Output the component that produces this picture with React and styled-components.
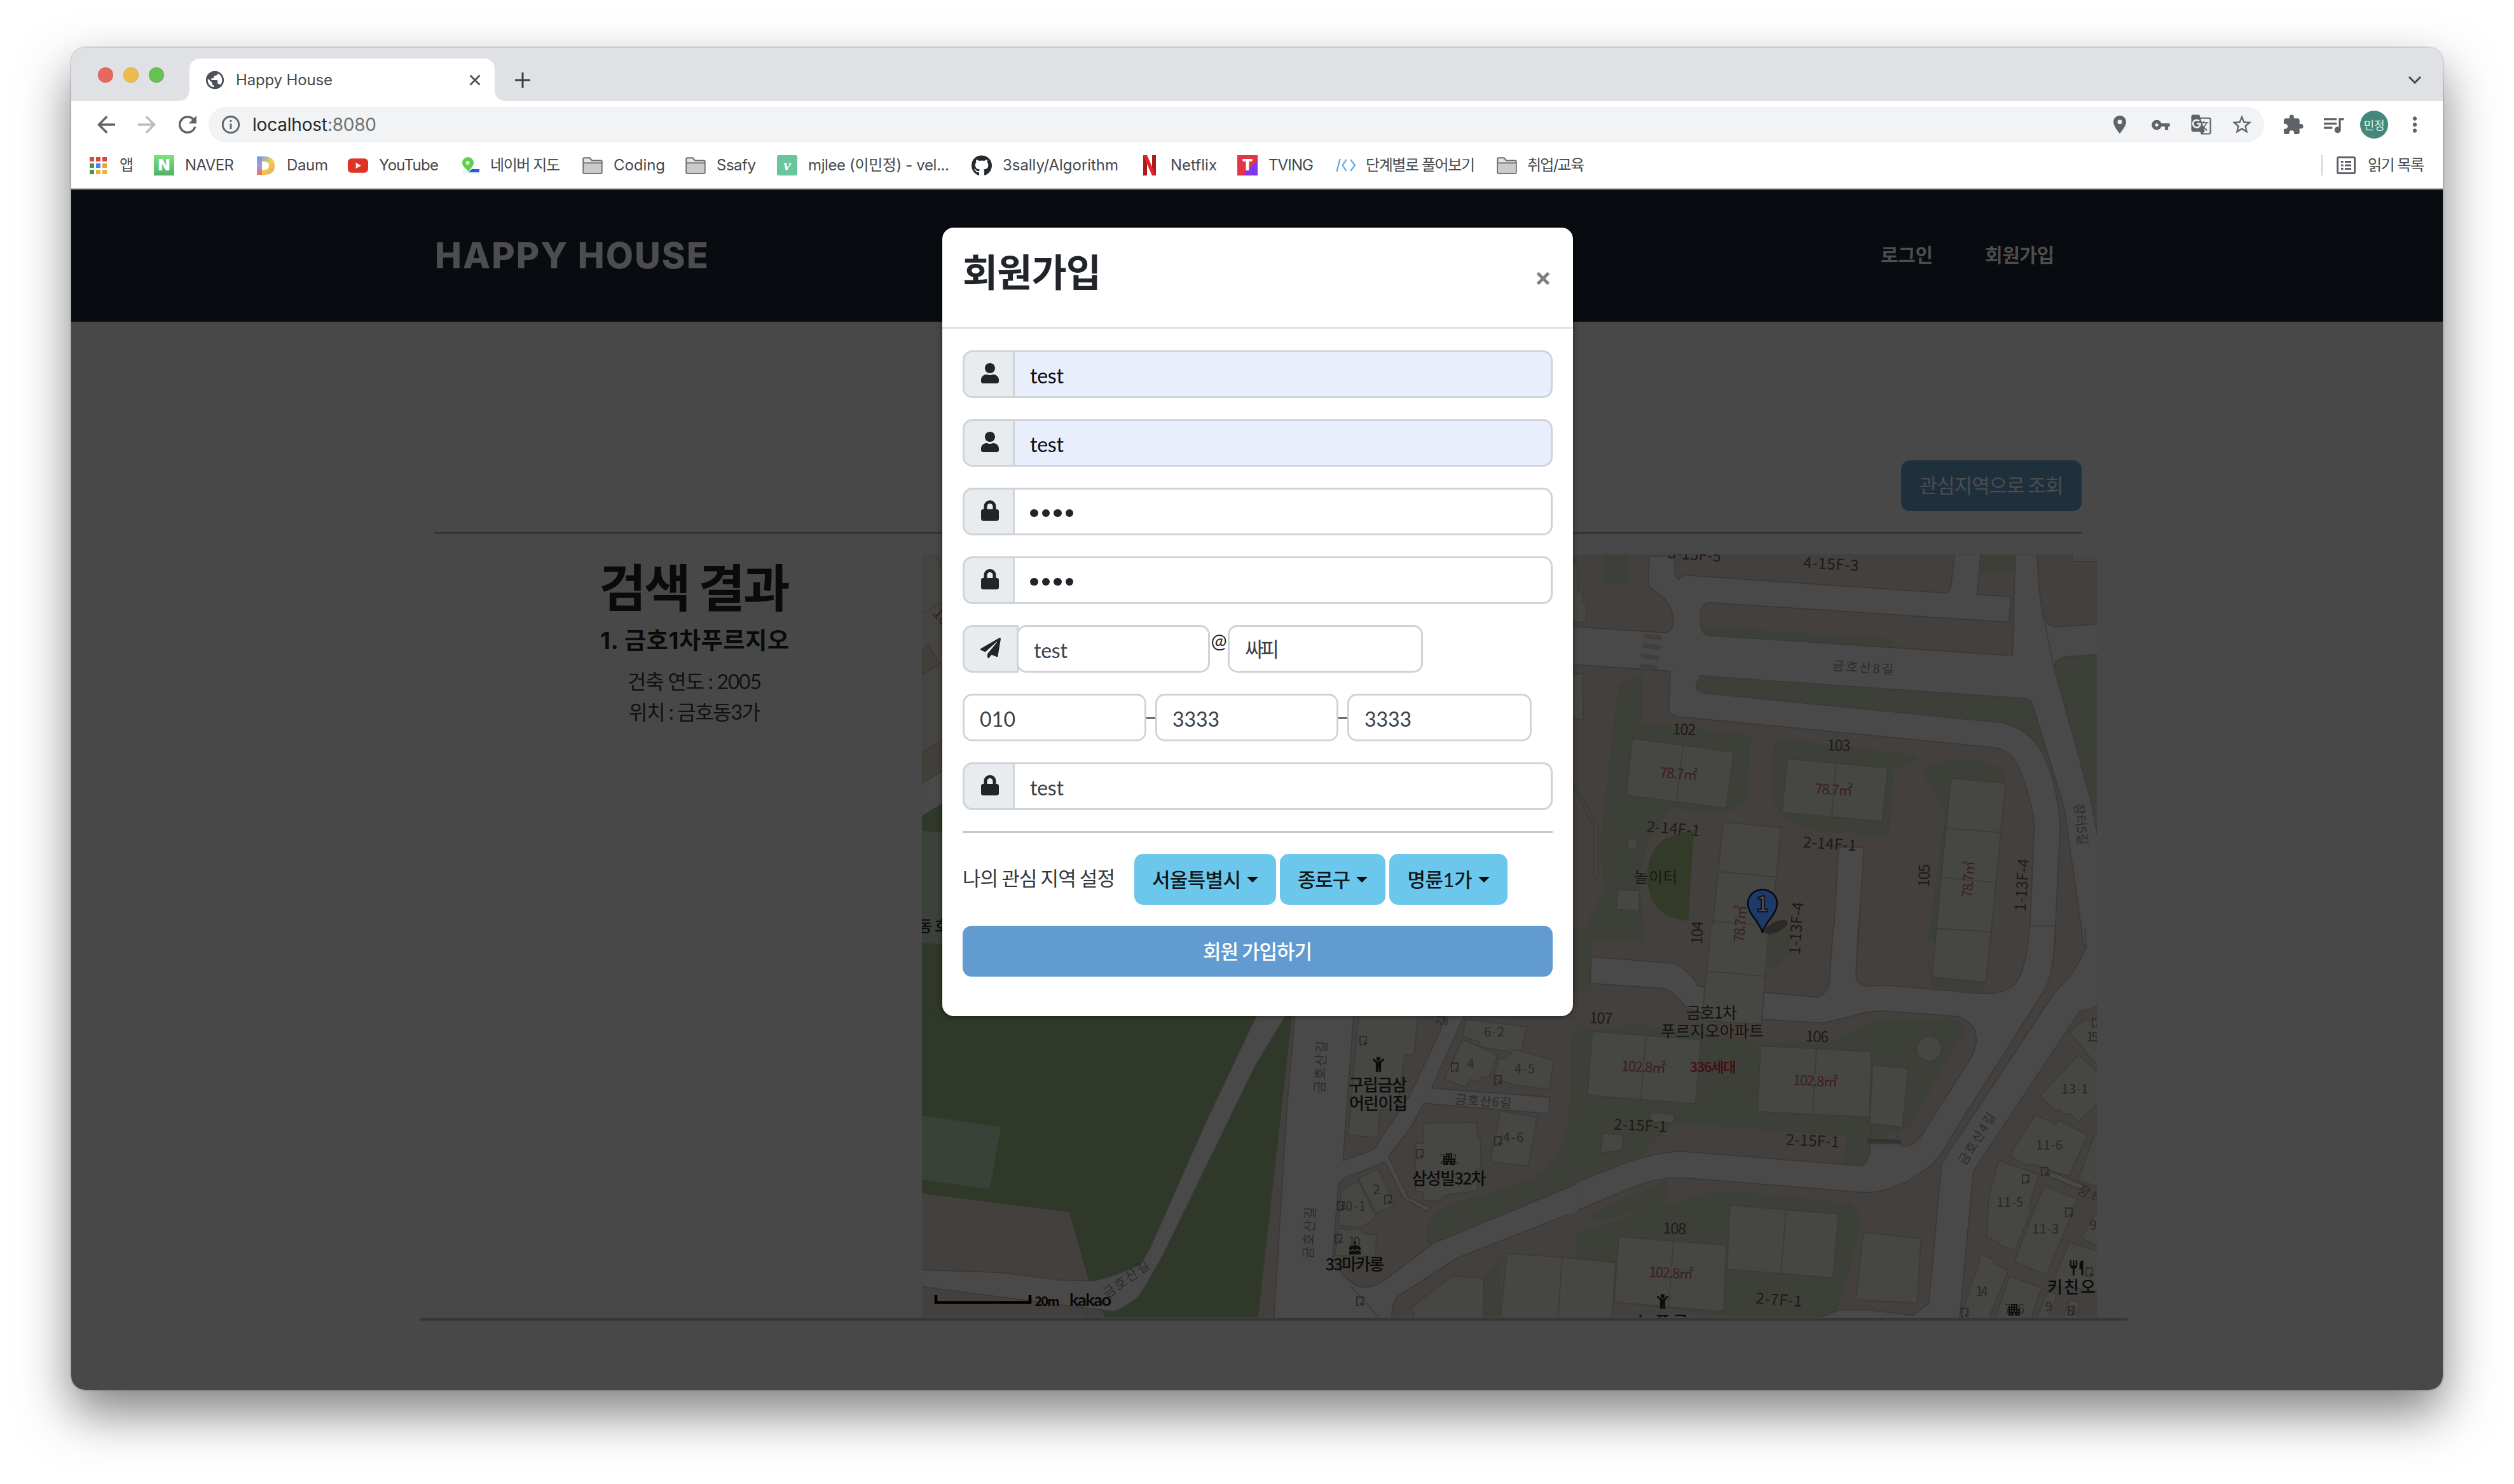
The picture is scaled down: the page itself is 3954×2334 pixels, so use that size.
import React, { useLayoutEffect, useRef, useState } from "react";
import styled, { createGlobalStyle, css } from "styled-components";
import {
  MdArrowBack, MdArrowForward, MdRefresh, MdInfoOutline, MdLocationOn, MdVpnKey, MdGTranslate,
  MdStarBorder, MdExtension, MdQueueMusic, MdMoreVert, MdPublic, MdApartment, MdCake, MdRestaurant,
} from "react-icons/md";
import { FaUser, FaLock, FaPaperPlane, FaGithub, FaChild } from "react-icons/fa";

const KR = '"Noto Sans CJK KR", sans-serif';
const UI = `Inter, ${KR}`;
const BODY = `Lato, ${KR}`;

const GlobalStyle = createGlobalStyle`
  *, *::before, *::after { box-sizing: border-box; }
  html, body { margin: 0; background: #fff; }
  svg { display: block; }
`;

/* ---------- text that is tracked to fill a known width ---------- */

const Line = styled.span`
  display: inline-block;
  white-space: nowrap;
  flex: none;
`;

function Fit({ width, children }) {
  const ref = useRef(null);
  const [spacing, setSpacing] = useState(0);
  useLayoutEffect(() => {
    const natural = ref.current.getBoundingClientRect().width;
    setSpacing((width - natural) / Math.max(1, children.length - 1));
  }, [width, children]);
  return (
    <Line ref={ref} style={{ letterSpacing: spacing, marginRight: -spacing }}>
      {children}
    </Line>
  );
}

/* ---------- browser window ---------- */

const Desktop = styled.div`
  width: 3954px;
  height: 2334px;
  padding: 75px 0 0 112px;
  background: #fff;
  overflow: hidden;
`;

const Window = styled.div`
  display: flex;
  flex-direction: column;
  width: 3730px;
  height: 2111px;
  border-radius: 22px;
  overflow: hidden;
  background: #fff;
  box-shadow: 0 0 3px rgba(0, 0, 0, 0.45), 0 36px 80px rgba(0, 0, 0, 0.5);
`;

const TabStrip = styled.div`
  display: flex;
  align-items: flex-end;
  flex: none;
  height: 84px;
  padding-left: 42px;
  background: #dfe1e5;
`;

const Lights = styled.div`
  display: flex;
  gap: 16px;
  width: 144px;
  padding-bottom: 29px;
`;

const Light = styled.span`
  width: 24px;
  height: 24px;
  border-radius: 50%;
  background: ${(p) => p.$color};
  box-shadow: inset 0 0 0 1px rgba(0, 0, 0, 0.1);
`;

const Tab = styled.div`
  position: relative;
  display: flex;
  align-items: center;
  width: 480px;
  height: 67px;
  padding: 0 21px 0 23px;
  border-radius: 16px 16px 0 0;
  background: #fff;
  color: #45494d;
  font: 400 24px/67px ${UI};
  &::before, &::after {
    content: "";
    position: absolute;
    bottom: 0;
    width: 16px;
    height: 16px;
  }
  &::before { left: -16px; background: radial-gradient(circle at 0 0, #dfe1e5 15.5px, #fff 16px); }
  &::after { right: -16px; background: radial-gradient(circle at 100% 0, #dfe1e5 15.5px, #fff 16px); }
`;

const TabTitle = styled.span`
  flex: 1;
  padding-left: 16px;
`;

const NewTab = styled.div`
  padding: 0 0 21px 32px;
`;

const TabMenu = styled.div`
  margin-left: auto;
  padding: 0 34px 27px 0;
`;

const Toolbar = styled.div`
  display: flex;
  align-items: center;
  flex: none;
  height: 74px;
  padding-left: 23px;
  color: #5f6368;
`;

const NavButton = styled.span`
  display: flex;
  justify-content: center;
  width: 64px;
  color: ${(p) => (p.$off ? "#babcbe" : "#5f6368")};
`;

const Omnibox = styled.div`
  display: flex;
  align-items: center;
  width: 3233px;
  height: 56px;
  margin-left: 1px;
  padding: 0 16px 0 18px;
  border-radius: 28px;
  background: #f1f3f4;
`;

const Address = styled.div`
  flex: 1;
  padding-left: 17px;
  color: #26282b;
  font: 400 28px/56px ${UI};
`;

const Port = styled.span`
  color: #6e7276;
`;

const OmniIcon = styled.span`
  display: flex;
  justify-content: center;
  width: 64px;
  &:last-child { margin-right: -13px; }
`;

const ActionIcon = styled.span`
  display: flex;
  justify-content: center;
  width: 64px;
  &:first-of-type { margin-left: 0; }
`;

const Actions = styled.div`
  display: flex;
  align-items: center;
  padding-left: 13px;
`;

const Avatar = styled.span`
  display: flex;
  align-items: center;
  justify-content: center;
  width: 44px;
  height: 44px;
  border-radius: 50%;
  background: #43887b;
  color: #e6f1ee;
  font: 400 18px/44px ${KR};
`;

const Bookmarks = styled.div`
  display: flex;
  align-items: center;
  flex: none;
  height: 65px;
  padding: 0 29px 9px 26px;
  border-bottom: 2px solid #b4b6b8;
  color: #45494d;
  font: 400 24px/54px ${UI};
`;

const Bookmark = styled.div`
  display: flex;
  align-items: center;
  gap: ${(p) => p.$gap || 17}px;
  width: ${(p) => p.$width}px;
`;

const ReadingList = styled.div`
  display: flex;
  align-items: center;
  gap: 19px;
  height: 32px;
  margin-left: auto;
  padding-left: 22px;
  border-left: 2px solid #d0d2d5;
`;

const Favicon = styled.span`
  display: flex;
  align-items: center;
  justify-content: center;
  flex: none;
  width: 32px;
  height: 32px;
  border-radius: ${(p) => p.$radius || 0}px;
  background: ${(p) => p.$bg || "none"};
  color: ${(p) => p.$color || "#fff"};
  font: ${(p) => p.$font || `900 24px/32px Inter, sans-serif`};
`;

const FolderIcon = () => (
  <svg width="32" height="27" viewBox="0 0 32 27">
    <path d="M1.3 24V3q0-1.700 1.700-1.700h8.500l3.500 4.200h14q1.700 0 1.700 1.700V24q0 1.700-1.700 1.700H3q-1.700 0-1.700-1.700z" fill="#e4e4e4" stroke="#6b6b6b" strokeWidth="2" />
    <path d="M2.300 9.500h27.400v15.200H2.300z" fill="#cbcbcb" />
    <path d="M1.300 9.300h29.400" stroke="#6b6b6b" strokeWidth="1.800" />
  </svg>
);

const AppsIcon = () => {
  const colors = ["#e0453a", "#e0453a", "#e0453a", "#3f9a5a", "#4285f4", "#eba236", "#3f9a5a", "#eeb13a", "#eeb13a"];
  return (
    <svg width="27" height="27" viewBox="0 0 27 27">
      {colors.map((c, i) => (
        <rect key={i} x={(i % 3) * 10} y={Math.floor(i / 3) * 10} width="7" height="7" fill={c} />
      ))}
    </svg>
  );
};

const DaumIcon = () => (
  <svg width="28" height="29" viewBox="0 0 28 29">
    <defs>
      <linearGradient id="daumSide" x1="0" y1="0" x2="0" y2="1">
        <stop offset="0" stopColor="#6f9bf5" /><stop offset="0.5" stopColor="#a59bd8" /><stop offset="1" stopColor="#ee6f62" />
      </linearGradient>
      <linearGradient id="daumBowl" x1="0" y1="0" x2="1" y2="1">
        <stop offset="0" stopColor="#6f9bf5" /><stop offset="0.550" stopColor="#f3cf4c" /><stop offset="1" stopColor="#ee9a52" />
      </linearGradient>
    </defs>
    <path d="M0 0h13q15 1 15 14.500T13 29H0z" fill="url(#daumBowl)" />
    <path d="M0 0h8v29H0z" fill="url(#daumSide)" />
    <path d="M8 8h4q7 .5 7 6.500T12 21H8z" fill="#fff" />
  </svg>
);

const YouTubeIcon = () => (
  <svg width="33" height="23" viewBox="0 0 33 23">
    <rect width="33" height="23" rx="6" fill="#df3225" />
    <path d="M13 6.500v10l8.500-5z" fill="#fff" />
  </svg>
);

const NaverMapIcon = () => (
  <svg width="32" height="32" viewBox="0 0 32 32">
    <path d="M4 24h26v6H4z" fill="#e4f7fb" />
    <path d="M12 3a9 9 0 0 1 9 9c0 5-5 9-8 14C9 21 3 18 3 12a9 9 0 0 1 9-9z" fill="#5fcf4f" />
    <circle cx="11.500" cy="12" r="3" fill="#d9f7d2" />
    <path d="M13 27l5-5h12v5z" fill="#2f55ea" />
  </svg>
);

const NetflixIcon = () => (
  <svg width="20" height="32" viewBox="0 0 20 32">
    <path d="M0 0h6v32l-6 .0zM14 0h6v32h-6z" fill="#a81b1f" />
    <path d="M0 0h6l14 32h-6z" fill="#e0242b" />
  </svg>
);

const CodeIcon = () => (
  <svg width="32" height="24" viewBox="0 0 32 24" fill="none" stroke="#5fa8e0" strokeWidth="2.200">
    <path d="M6.500 2L1.500 22M16.500 3l-6 9 6 9M23 3l7 9-7 9" />
  </svg>
);

const ReadingIcon = () => (
  <svg width="30" height="28" viewBox="0 0 30 28" fill="none" stroke="#5f6368">
    <rect x="1.500" y="1.500" width="27" height="25" rx="1.500" strokeWidth="3" />
    <path d="M7 8.500h3.500M7 14h3.500M7 19.500h3.500M13 8.500h10M13 14h10M13 19.500h10" strokeWidth="2.800" />
  </svg>
);

/* ---------- page ---------- */

const Page = styled.div`
  position: relative;
  flex: 1;
  background: #484848;
  overflow: hidden;
  font-family: ${BODY};
`;

const SiteHeader = styled.header`
  display: flex;
  align-items: center;
  height: 208px;
  padding: 0 611px 0 572px;
  background: #080b10;
  color: #4d4d4d;
`;

const Brand = styled.div`
  flex: 1;
  font: 800 56px/70px Inter, sans-serif;
`;

const SiteNav = styled.nav`
  display: flex;
  gap: 82px;
  padding-bottom: 6px;
  font: 700 30px/44px ${KR};
`;

const Main = styled.main`
  width: 2591px;
  margin-left: 571px;
  padding-top: 218px;
`;

const SearchRow = styled.div`
  display: flex;
  justify-content: flex-end;
`;

const SearchButton = styled.div`
  display: flex;
  justify-content: center;
  width: 284px;
  height: 80px;
  border-radius: 14px;
  background: #1f303d;
  color: #4d4d4d;
  font: 400 31px/76px ${KR};
`;

const Rule = styled.div`
  height: ${(p) => p.$size || 4}px;
  margin: ${(p) => p.$margin || 0};
  background: ${(p) => p.$color};
`;

const Results = styled.section`
  display: flex;
  width: 2563px;
  margin-left: 52px;
`;

const Summary = styled.div`
  width: 715px;
  text-align: center;
  color: #0a0a0a;
`;

const SummaryTitle = styled.h1`
  margin: 0;
  font: 700 80px/94px ${KR};
`;

const SummaryName = styled.h2`
  margin: 18px 0 16px;
  font: 700 37px/48px Inter, ${KR};
`;

const SummaryLine = styled.p`
  margin: 0;
  color: #101112;
  font: 400 32px/48px ${BODY};
`;

/* ---------- map ---------- */

const MapSvg = styled.svg`
  flex: none;
  width: 1848px;
  height: 1200px;
  overflow: hidden;
  font-family: ${KR};
`;

const LAND = "#43403e";
const GRASS = "#3d3f39";
const ROAD = "#494949";
const FOREST = "#2f3829";

const Shapes = ({ list, fill, stroke }) =>
  list.map((pts, i) => (
    <polygon key={i} points={pts} fill={fill} stroke={stroke} strokeWidth="1.500" vectorEffect="non-scaling-stroke" />
  ));

const Roads = ({ list }) =>
  list.map((d, i) => (
    <path key={i} d={d} fill={ROAD} stroke="#383838" strokeWidth="1.500" vectorEffect="non-scaling-stroke" />
  ));

const Grass = ({ list }) => list.map((d, i) => <path key={i} d={d} fill={GRASS} />);

const Walls = ({ d }) => <path d={d} fill="none" stroke="#3a3a38" strokeWidth="1.500" vectorEffect="non-scaling-stroke" />;

const BUILDING = { fill: "#464643", stroke: "#3a3a38" };

const LABELS = [
  [2665, 872, "3-15F-5", 24, 4, 84], [2880, 887, "4-15F-3", 24, 3, 87],
  [2649, 1147, "102", 24, 2, 37], [2892, 1172, "103", 24, 2, 37],
  [2632, 1303, "2-14F-1", 24, 5, 84], [2878, 1327, "2-14F-1", 24, 4, 84],
  [3026, 1377, "105", 24, -88, 37], [3180, 1392, "1-13F-4", 24, -86, 83],
  [2669, 1467, "104", 24, -88, 37], [2825, 1460, "1-13F-4", 24, -86, 83],
  [2518, 1601, "107", 24, 2, 37], [2858, 1630, "106", 24, 2, 37],
  [2580, 1770, "2-15F-1", 24, 3, 84], [2851, 1794, "2-15F-1", 24, 3, 84],
  [2634, 1932, "108", 24, 2, 37], [2798, 2044, "2-7F-1", 24, 4, 73],
];
const AREAS = [
  [2640, 1217, "78.7㎡", 22, 4, 59], [2884, 1242, "78.7㎡", 22, 3, 59],
  [3096, 1383, "78.7㎡", 22, -86, 58], [2737, 1453, "78.7㎡", 22, -86, 58],
  [2585, 1678, "102.8㎡", 22, 3, 70], [2855, 1700, "102.8㎡", 22, 3, 70],
  [2628, 2002, "102.8㎡", 22, 3, 70],
];
const NUMBERS = [
  [3263, 1713, "13-1", 20, 0, 42], [3223, 1801, "11-6", 20, 0, 42], [3161, 1891, "11-5", 20, 0, 42],
  [3217, 1933, "11-3", 20, 0, 42], [3117, 2031, "14", 20, 0, 19], [3222, 2055, "9", 20, 0, 10],
  [3168, 2059, "7-6", 20, 0, 32], [3291, 1631, "15", 20, 0, 19], [3292, 1927, "9", 20, 0, 10],
  [3257, 2062, "8", 20, 0, 10], [2350, 1623, "6-2", 20, 0, 32], [2313, 1673, "4", 20, 0, 10],
  [2398, 1681, "4-5", 20, 0, 32], [2380, 1789, "4-6", 20, 0, 32], [2279, 1823, "2-1", 20, 0, 30],
  [2165, 1871, "2", 20, 0, 10], [2126, 1897, "30-1", 20, 0, 44], [2130, 1953, "10", 20, 0, 19],
];
const STREETS = [
  [2930, 1050, "금호산8길", 20, 4, 96], [3273, 1296, "장터5길", 20, 84, 66],
  [3109, 1791, "금호산4길", 20, -58, 92], [3288, 1879, "장터", 22, 28, 44],
  [2333, 1732, "금호산6길", 20, 4, 89], [2077, 1678, "금호산길", 21, -87, 82],
  [2059, 1939, "금호산길", 21, -87, 82], [1771, 2012, "금호산길", 21, -36, 84],
  [2268, 1606, "길", 20, -80, 20],
];
const PLACES = [
  [2604, 1379, "놀이터", 24, 0, 68, "#181a14", 400], [2692, 1593, "금호1차", 25, 0, 80, "#15130e", 400],
  [2693, 1622, "푸르지오아파트", 25, 0, 162, "#15130e", 400], [2694, 1678, "336세대", 22, 0, 73, "#450a0e", 500],
  [2167, 1707, "구립금삼", 26, 0, 92, "#0c0c0c", 500], [2168, 1736, "어린이집", 26, 0, 92, "#0c0c0c", 500],
  [2279, 1854, "삼성빌32차", 26, 0, 117, "#0c0c0c", 500], [2131, 1989, "33마카롱", 26, 0, 93, "#0c0c0c", 500],
  [3271, 2025, "키친오늘", 26, 0, 102, "#0a0a0a", 500], [2615, 2079, "노프르", 26, 0, 80, "#0a0a0a", 500],
  [1468, 1456, "동호", 24, 0, 48, "#0c0d0c", 500], [1647, 2047, "20m", 20, 0, 39, "#050505", 600],
];

const MapLabels = ({ list, color, weight = 400 }) =>
  list.map(([x, y, text, size, angle, width, own, ownWeight], i) => (
    <text
      key={i} x={x} y={y} fontSize={size} fill={own || color} fontWeight={ownWeight || weight}
      textAnchor="middle" dy="0.360em" textLength={width} transform={`rotate(${angle} ${x} ${y})`}
    >
      {text}
    </text>
  ));

const DOORS = [
  [2145, 1637], [2289, 1679], [2357, 1699], [2357, 1795], [2234, 1815], [2184, 1887], [2110, 1897], [2106, 1949],
  [2140, 2047], [3187, 1855], [3217, 1843], [3255, 1907], [3091, 2065], [3259, 2062], [3287, 2001], [3297, 1609],
];

function MapView() {
  return (
    <MapSvg viewBox="1450 872 1848 1200">
      <rect x="1450" y="872" width="1848" height="1200" fill={LAND} />

      <g transform="translate(2470 860) scale(.5357 .3954)">
        <Grass list={[
          "M140 560Q180 510 212 512L210 700L530 750L520 1000Q480 1060 420 1060L300 1040L240 1140L200 1300L210 1440L215 1568H20L100 1360L85 1200Z",
          "M600 760L1020 830Q1020 870 950 880L935 1150Q850 1170 820 1130Q780 1150 700 1120Q580 1060 590 950Z",
          "M1040 880Q1100 840 1200 850Q1280 870 1275 940L1232 1568H1050L1100 1060Q1070 960 1040 920Z",
          "M97 30H170V145H97Z", "M1204 30H1306V105L1200 103Z",
        ]} />
        <Roads list={[
          "M-300 290L280 342Q300 335 303 300Q298 230 270 200L228 155L232 38L305 38L308 115L318 130Q325 113 345 114L1100 184Q1115 180 1118 150L1128 30L1204 30L1195 190L1293 198L1288 300L410 222Q385 228 383 250L383 320Q385 345 405 352L1298 433L1306 30L1370 30Q1375 190 1388 280Q1400 318 1430 318L1560 306V428L1450 438Q1425 445 1420 480L1530 1020L1560 1250V1590H1508L1450 1040L1355 620Q1350 605 1330 603L380 513L280 493L-300 440Z",
          "M787 1195L862 1195L843 1590L771 1590Z",
          "M293 500L288 645Q290 670 315 675L1235 797Q1285 805 1305 850Q1345 950 1362 1100L1347 1590H1421L1438 1100Q1425 920 1385 820Q1350 730 1270 700L400 583Q370 580 370 555Q372 530 380 513",
        ]} />
        <path d="M296 490L378 500L376 530L296 530Z" fill={ROAD} />
        <Grass list={[
          "M377 514L1330 604Q1350 607 1355 622L1398 830Q1350 725 1270 699L402 582Q372 578 371 550Z",
          "M384 300L410 320L948 368L945 398L405 351Q385 340 384 320Z",
          "M1560 430L1450 440Q1427 445 1422 480L1532 1020L1560 1180Z",
        ]} />
        <path d="M215 345l53 8v18l-53-8zM212 384l52 8v18l-52-8zM208 425l52 8v18l-52-8zM205 464l52 8v18l-52-8z" fill="#403f3c" />
        <Shapes {...BUILDING} list={[
          "182,762 480,817 457,1040 164,988", "637,843 932,880 915,1092 621,1057",
          "448,1095 618,1117 585,1580 412,1580", "1117,920 1277,940 1232,1580 1070,1580",
          "168,1160 196,1160 194,1203 168,1200", "138,1362 204,1368 200,1448 135,1443",
          "0,505 36,505 38,686 0,684", "0,60 20,75 22,180 36,180 36,225 48,228 45,300 0,300", "1473,20 1560,20 1560,58 1473,58",
        ]} />
        <Walls d="M330 790L312 1012M780 862L767 1072M435 1292L603 1313M420 1488L590 1510M1102 1119L1263 1136M1088 1316L1248 1335M1074 1514L1235 1531M1392 300L1420 480M0 920Q20 1000 68 1110V1310Q74 1330 81 1310V1105Q40 1020 14 940" />
        <path d="M362 1132Q225 1140 224 1320Q235 1480 346 1487Z" fill="#333b28" />
      </g>

      <g transform="translate(2470 1460) scale(.5357 .4082)">
        <Grass list={[
          "M0 0H60V110L62 240L0 240Z",
          "M0 400L60 390L200 370L380 400L560 440H760L900 350L1130 345Q1180 400 1120 470L1000 760L880 830L870 915L805 905L810 800L300 750L200 880L0 985Z",
          "M20 1170L350 1040Q420 1000 600 1030L820 1060Q860 1100 850 1170L780 1498H480L128 1440L20 1270Z",
          "M50 1110L285 965V1080Q200 1090 70 1125Z", "M1045 80L1061 187L1219 208L1215 248L1060 225Z", "M590 0H650Q640 150 580 160Z",
        ]} />
        <Roads list={[
          "M62 110L300 135Q350 160 375 222L398 228L395 330L340 305Q300 240 275 232L58 212Z",
          "M772 -10L760 210Q750 260 720 265L568 247L562 350L720 364Q760 365 860 325Q900 315 940 320L1140 340Q1200 370 1190 450L1180 490L1030 800Q1000 845 975 840L965 830L880 830Q880 910 850 915L330 860Q260 860 160 905L-70 1025V1135L180 1000Q260 955 340 962L860 1018Q960 1020 1060 910Q1100 860 1110 820L1395 230Q1420 170 1423 -10H1348Q1340 160 1305 215Q1275 245 1245 250Q1200 255 1100 238L930 220L870 223Q840 215 838 185L845 -10",
          "M1510 0L1515 75L1470 180L1420 250L1090 905L1052 1445L1005 1492L870 1470L790 1470L715 1510L1142 1510L1183 935L1495 320L1530 310L1560 283V-20",
        ]} />
        <Shapes {...BUILDING} list={[
          "64,397 383,430 367,677 50,643", "412,0 583,0 560,370 385,355", "558,453 884,475 877,727 550,706",
          "888,527 991,540 975,767 878,752", "235,708 306,717 303,752 232,745", "95,790 155,797 150,855 88,865",
          "1075,0 1235,14 1219,208 1061,187", "142,1188 457,1222 450,1477 128,1440", "468,1066 787,1102 771,1347 460,1313",
          "860,1171 1029,1196 1018,1444 838,1431", "-60,1262 132,1288 122,1510 -60,1510",
          "1465,400 1505,355 1560,352 1560,550", "1492,487 1560,570 1560,660 1492,745 1465,712 1450,718 1435,700 1425,705 1378,647",
          "1365,718 1425,755 1430,738 1519,797 1463,955 1345,905 1340,915 1290,875",
          "1257,893 1375,950 1345,1080 1355,1080 1305,1243 1262,1222 1260,1210 1222,1192 1228,1040",
          "1390,992 1490,1045 1397,1335 1303,1285", "1207,1255 1245,1280 1243,1292 1285,1320 1225,1510 1145,1500",
          "1290,1340 1384,1385 1350,1510 1245,1510", "1465,1210 1560,1250 1560,1400 1435,1380 1410,1380", "1560,1060 1500,1195 1560,1230",
          "1540,790 1560,780 1560,1000 1490,970", "1400,1400 1430,1410 1400,1510 1365,1510", "1465,1430 1495,1440 1485,1510 1445,1510",
        ]} />
        <path d="M412 -12H583V3H412zM1076 -12H1234V12L1076 -2z" fill="#464643" />
        <Walls d="M222 413L207 658M402 165L572 185M722 465L711 715M303 1205L288 1460M633 1086L618 1330M885 760L880 810M962 765L958 812" />
        <ellipse cx="1053" cy="464" rx="36" ry="47" fill="#464643" stroke="#3a3a38" strokeWidth="2" />
        <path d="M868 810L970 815V836L960 827L885 824L878 835Z" fill="#323231" />
        <path d="M1415 950L1505 1000" stroke="#2f2f2f" strokeWidth="22" strokeLinecap="round" />
        <path d="M1415 950L1505 1000" stroke={ROAD} strokeWidth="17" strokeLinecap="round" />
      </g>

      <g transform="translate(1420 1500) scale(.676 .3827)">
        <path d="M0 0H912L905 258L826 1500H472L432 1340L387 1062L0 975Z" fill={FOREST} />
        <path d="M44 665L228 712L202 968L44 928Z" fill="#394139" />
        <Grass list={["M1568 230L1550 640Q1540 850 1470 920Q1380 980 1290 1020Q1200 1080 1220 1190L1235 1230L1568 1000Z", "M1352 1332L1390 1250V1500H1352Z"]} />
        <Roads list={[
          "M832 220L903 220L820 460L605 1240Q560 1380 548 1410Q520 1450 492 1470L420 1455L20 1362V1298L225 1310L370 1342L440 1345Q480 1335 550 1280Q570 1230 580 1190L708 680Z",
          "M914 220L1050 220L1024 850L1095 805L1180 580L1250 320L1270 220H1315L1230 552L1505 590L1503 657L1212 615L1185 705L1130 833L1175 1000L1228 1045L1220 1058L1165 1005L1122 855L1030 920Q1015 930 1013 960L1000 1240Q1010 1310 1050 1360Q1080 1385 1115 1350L1235 1190L1556 955V1066L1290 1250L1150 1410Q1135 1440 1138 1510H863L895 600Z",
        ]} />
        <path d="M1545 968L1570 948V1058L1545 1076Z" fill={ROAD} />
        <Shapes {...BUILDING} list={[
          "1062,230 1199,230 1190,415 1168,418 1150,640 1110,640 1105,756 1036,746",
          "1310,270 1452,300 1438,412 1370,390 1345,385 1340,360 1303,340",
          "1303,353 1383,415 1365,505 1345,505 1340,530 1320,515 1310,548 1260,515",
          "1422,392 1515,440 1503,557 1425,540 1375,510 1385,430 1405,432", "1390,645 1476,672 1455,873 1367,855",
          "1212,698 1335,694 1337,755 1343,760 1345,850 1335,975 1275,988 1255,1000 1250,1017 1212,1014 1210,978 1193,978 1193,780 1211,778",
          "1060,925 1105,883 1145,1035 1102,1065", "1020,970 1060,935 1102,1085 1065,1125 1013,1115",
          "1015,1130 1065,1135 1070,1150 1102,1155 1100,1245 1005,1240", "1405,1232 1534,1248 1524,1510 1390,1510",
          "1277,1325 1352,1332 1350,1510 1195,1510 1182,1455",
        ]} />
        <Walls d="M1040 1360L1110 1500M418 1455L424 1500M428 1458L432 1500" />
      </g>

      <g transform="translate(1440 860) scale(.3333 .408)">
        <path d="M30 30H130V1000L30 1010Z" fill="#454441" />
        <path d="M30 400L60 383L115 450L30 495ZM30 795L130 745V860L30 915Z" fill="#43403c" stroke="#383735" strokeWidth="1.500" vectorEffect="non-scaling-stroke" />
        <path d="M30 915L130 865V985L30 1035Z" fill={ROAD} />
        <path d="M30 1038L130 988V1100L30 1096Z" fill={FOREST} />
        <path d="M30 1096L130 1102V1535L30 1525Z" fill="#3a4239" />
        <path d="M30 1525L130 1535V1800H30Z" fill={FOREST} />
        <Walls d="M30 260L130 210M95 30L130 80" />
      </g>
      <text x="1466" y="965" fontSize="24" fill="#3d1d22" transform="rotate(50 1466 965)">102</text>

      {DOORS.map(([x, y], i) => (
        <path key={i} d={`M${x - 2} ${y + 6}h-4v-13h10v8M${x + 6} ${y + 4}h-6m3 -3l-3 3l3 3`} fill="none" stroke="#2a2a2a" strokeWidth="1.800" />
      ))}

      <MapLabels list={NUMBERS} color="#2a2928" />
      <MapLabels list={STREETS} color="#2c2c2c" />
      <MapLabels list={LABELS} color="#1e1b17" />
      <MapLabels list={AREAS} color="#3c1d22" />
      <MapLabels list={PLACES} />

      <FaChild x="2156" y="1662" size={24} color="#0d0d0d" />
      <FaChild x="2603" y="2035" size={24} color="#0d0d0d" />
      <MdApartment x="2267" y="1811" size={24} color="#0d0d0d" />
      <MdApartment x="3156" y="2048" size={24} color="#0d0d0d" />
      <MdCake x="2119" y="1951" size={24} color="#0d0d0d" />
      <MdRestaurant x="3252" y="1980" size={28} color="#0d0d0d" />

      <ellipse cx="2793" cy="1458" rx="20" ry="8" fill="#1c1c1c" opacity="0.600" transform="rotate(-25 2793 1458)" />
      <path d="M2772 1467C2768 1450 2749 1438 2749 1421A23 22 0 0 1 2795 1421C2795 1438 2776 1450 2772 1467Z" fill="#1d3a68" stroke="#070a10" strokeWidth="2.500" />
      <text x="2772" y="1434" fontSize="34" fontWeight="700" textAnchor="middle" fill="#4b4d52" stroke="#080a0e" strokeWidth="1.500">1</text>

      <path d="M1472 2037V2048.500H1620V2037" fill="none" stroke="#000" strokeWidth="4.500" />
      <text x="1715" y="2054" fontSize="27" fontFamily="Lato" fontWeight="700" textAnchor="middle" textLength="66" fill="#080808">kakao</text>
    </MapSvg>
  );
}

/* ---------- sign-up dialog ---------- */

const Overlay = styled.div`
  position: absolute;
  inset: 0;
  display: flex;
  justify-content: center;
  align-items: flex-start;
  padding: 60px 0 0 2px;
`;

const Dialog = styled.div`
  width: 992px;
  height: 1240px;
  border-radius: 18px;
  background: #fff;
  box-shadow: 0 0 8px rgba(0, 0, 0, 0.5);
  color: #212529;
`;

const DialogHeader = styled.div`
  display: flex;
  justify-content: space-between;
  align-items: flex-start;
  height: 159px;
  padding: 26px 36px 0 32px;
  border-bottom: 3px solid #dee2e6;
`;

const DialogTitle = styled.h2`
  margin: 0;
  font: 700 60px/82px ${KR};
`;

const CloseIcon = () => (
  <svg width="22" height="22" viewBox="0 0 22 22">
    <path d="M2.500 2.500l17 17M19.500 2.500l-17 17" stroke="#808080" strokeWidth="5" />
  </svg>
);

const CloseButton = styled.div`
  padding-top: 43px;
`;

const Form = styled.div`
  display: flex;
  flex-direction: column;
  gap: 33px;
  padding: 34px 32px 0;
`;

const FieldRow = styled.div`
  display: flex;
  height: 75px;
`;

const edge = css`
  border: 3px solid #ced4da;
`;

const Prefix = styled.span`
  ${edge}
  display: flex;
  align-items: center;
  justify-content: center;
  flex: none;
  width: ${(p) => p.$width || 82}px;
  padding: 0 0 3px ${(p) => (p.$width ? 0 : 3)}px;
  border-radius: 15px 0 0 15px;
  background: #e9ecef;
`;

const Input = styled.div`
  ${edge}
  display: flex;
  align-items: center;
  gap: 6px;
  flex: ${(p) => (p.$width ? "none" : 1)};
  width: ${(p) => (p.$width ? `${p.$width}px` : "auto")};
  margin-left: ${(p) => (p.$joined ? -3 : 0)}px;
  padding: ${(p) => (p.$korean ? 0 : 5)}px 0 0 ${(p) => p.$indent || 24}px;
  border-radius: ${(p) => (p.$joined && !p.$width ? "0 15px 15px 0" : "15px")};
  background: ${(p) => (p.$filled ? "#e8eefc" : "#fff")};
  color: ${(p) => (p.$filled ? "#0c0d0e" : "#3b4046")};
  font: 400 32px/64px ${BODY};
`;

const Dot = styled.span`
  width: 12.500px;
  height: 12.500px;
  border-radius: 50%;
  background: #212529;
`;

const At = styled.span`
  display: flex;
  justify-content: center;
  width: 28px;
  font: 400 30px/48px ${BODY};
`;

const Dash = styled.span`
  align-self: center;
  width: ${(p) => p.$width}px;
  height: 3px;
  margin-top: 2px;
  background: #6a6e72;
`;

const RegionRow = styled.div`
  display: flex;
  gap: 6px;
  height: 80px;
`;

const RegionLabel = styled.div`
  width: 264px;
  color: #33373b;
  font: 400 31px/73px ${KR};
`;

const Dropdown = styled.div`
  display: flex;
  align-items: center;
  justify-content: center;
  gap: 9px;
  width: ${(p) => p.$width}px;
  border-radius: 14px;
  background: #6cc7ec;
  color: #10181c;
  font: 500 31px/76px ${BODY};
`;

const Caret = styled.span`
  border: 9px solid transparent;
  border-top-color: #080c0e;
  border-bottom-width: 0;
`;

const Submit = styled.div`
  display: flex;
  justify-content: center;
  height: 80px;
  border-radius: 14px;
  background: #619bcf;
  color: #fff;
  font: 500 31px/78px ${KR};
`;

const Field = ({ icon, filled, text }) => (
  <FieldRow>
    <Prefix>{icon}</Prefix>
    <Input $joined $filled={filled}>
      {text ? <Fit width={53}>{text}</Fit> : [0, 1, 2, 3].map((i) => <Dot key={i} />)}
    </Input>
  </FieldRow>
);

function SignUpDialog() {
  const user = <FaUser size={32} />;
  const lock = <FaLock size={32} />;
  return (
    <Overlay>
      <Dialog>
        <DialogHeader>
          <DialogTitle><Fit width={218}>회원가입</Fit></DialogTitle>
          <CloseButton><CloseIcon /></CloseButton>
        </DialogHeader>
        <Form>
          <Field icon={user} filled text="test" />
          <Field icon={user} filled text="test" />
          <Field icon={lock} />
          <Field icon={lock} />
          <FieldRow>
            <Prefix $width={88}><FaPaperPlane size={32} /></Prefix>
            <Input $joined $width={304}><Fit width={53}>test</Fit></Input>
            <At>@</At>
            <Input $width={307} $korean><Fit width={54}>싸피</Fit></Input>
          </FieldRow>
          <FieldRow>
            <Input $width={289}><Fit width={56}>010</Fit></Input>
            <Dash $width={14} />
            <Input $width={288}><Fit width={74}>3333</Fit></Input>
            <Dash $width={14} />
            <Input $width={290}><Fit width={74}>3333</Fit></Input>
          </FieldRow>
          <Field icon={lock} text="test" />
          <Rule $size={3} $color="#c6c8c9" />
          <RegionRow>
            <RegionLabel><Fit width={240}>나의 관심 지역 설정</Fit></RegionLabel>
            <Dropdown $width={223}><Fit width={140}>서울특별시</Fit><Caret /></Dropdown>
            <Dropdown $width={166}><Fit width={83}>종로구</Fit><Caret /></Dropdown>
            <Dropdown $width={186}><Fit width={102}>명륜1가</Fit><Caret /></Dropdown>
          </RegionRow>
          <Submit><Fit width={172}>회원 가입하기</Fit></Submit>
        </Form>
      </Dialog>
    </Overlay>
  );
}

/* ---------- assembly ---------- */

function BrowserChrome() {
  return (
    <>
      <TabStrip>
        <Lights>
          <Light $color="#e5695e" />
          <Light $color="#efbc4b" />
          <Light $color="#68c253" />
        </Lights>
        <Tab>
          <MdPublic size={34} color="#4c5157" />
          <TabTitle><Fit width={152}>Happy House</Fit></TabTitle>
          <svg width="20" height="20" viewBox="0 0 20 20" stroke="#4a4e52" strokeWidth="2.800"><path d="M2.500 2.500l15 15M17.500 2.500l-15 15" /></svg>
        </Tab>
        <NewTab>
          <svg width="24" height="24" viewBox="0 0 24 24" stroke="#3c4043" strokeWidth="3"><path d="M12 0v24M0 12h24" /></svg>
        </NewTab>
        <TabMenu>
          <svg width="20" height="12" viewBox="0 0 20 12" fill="none" stroke="#46494d" strokeWidth="3"><path d="M1 1l9 9 9-9" /></svg>
        </TabMenu>
      </TabStrip>
      <Toolbar>
        <NavButton><MdArrowBack size={42} /></NavButton>
        <NavButton $off><MdArrowForward size={42} /></NavButton>
        <NavButton><MdRefresh size={42} /></NavButton>
        <Omnibox>
          <MdInfoOutline size={34} />
          <Address><Fit width={118}>localhost</Fit><Port><Fit width={77}>:8080</Fit></Port></Address>
          <OmniIcon><MdLocationOn size={34} /></OmniIcon>
          <OmniIcon><MdVpnKey size={31} /></OmniIcon>
          <OmniIcon><MdGTranslate size={34} /></OmniIcon>
          <OmniIcon><MdStarBorder size={36} /></OmniIcon>
        </Omnibox>
        <Actions>
          <ActionIcon><MdExtension size={35} /></ActionIcon>
          <ActionIcon><MdQueueMusic size={40} /></ActionIcon>
          <ActionIcon><Avatar>민정</Avatar></ActionIcon>
          <ActionIcon><MdMoreVert size={38} /></ActionIcon>
        </Actions>
      </Toolbar>
      <Bookmarks>
        <Bookmark $width={104} $gap={18}><Favicon><AppsIcon /></Favicon><Fit width={20}>앱</Fit></Bookmark>
        <Bookmark $width={160}><Favicon $bg="linear-gradient(#79e47c, #55b06b)">N</Favicon><Fit width={77}>NAVER</Fit></Bookmark>
        <Bookmark $width={145}><Favicon><DaumIcon /></Favicon><Fit width={65}>Daum</Fit></Bookmark>
        <Bookmark $width={177}><Favicon><YouTubeIcon /></Favicon><Fit width={94}>YouTube</Fit></Bookmark>
        <Bookmark $width={192} $gap={15}><Favicon><NaverMapIcon /></Favicon><Fit width={110}>네이버 지도</Fit></Bookmark>
        <Bookmark $width={162}><Favicon><FolderIcon /></Favicon><Fit width={81}>Coding</Fit></Bookmark>
        <Bookmark $width={144}><Favicon><FolderIcon /></Favicon><Fit width={62}>Ssafy</Fit></Bookmark>
        <Bookmark $width={306}><Favicon $bg="#69c59b" $radius={3} $font={'italic 700 26px/28px "Liberation Serif", serif'}>v</Favicon><Fit width={222}>mjlee (이민정) - vel...</Fit></Bookmark>
        <Bookmark $width={264}><Favicon $color="#24292e"><FaGithub size={33} /></Favicon><Fit width={182}>3sally/Algorithm</Fit></Bookmark>
        <Bookmark $width={154}><Favicon><NetflixIcon /></Favicon><Fit width={73}>Netflix</Fit></Bookmark>
        <Bookmark $width={155}><Favicon $bg="linear-gradient(135deg, #e23647 62%, #8236f0 62%)">T</Favicon><Fit width={71}>TVING</Fit></Bookmark>
        <Bookmark $width={253} $gap={15}><Favicon><CodeIcon /></Favicon><Fit width={172}>단계별로 풀어보기</Fit></Bookmark>
        <Bookmark $width={160} $gap={16}><Favicon><FolderIcon /></Favicon><Fit width={90}>취업/교육</Fit></Bookmark>
        <ReadingList><ReadingIcon /><Fit width={89}>읽기 목록</Fit></ReadingList>
      </Bookmarks>
    </>
  );
}

export default function App() {
  return (
    <Desktop>
      <GlobalStyle />
      <Window>
        <BrowserChrome />
        <Page>
          <SiteHeader>
            <Brand><Fit width={430}>HAPPY HOUSE</Fit></Brand>
            <SiteNav><Fit width={82}>로그인</Fit><Fit width={109}>회원가입</Fit></SiteNav>
          </SiteHeader>
          <Main>
            <SearchRow><SearchButton><Fit width={227}>관심지역으로 조회</Fit></SearchButton></SearchRow>
            <Rule $color="#363636" $margin="32px 0" />
            <Results>
              <Summary>
                <SummaryTitle><Fit width={300}>검색 결과</Fit></SummaryTitle>
                <SummaryName><Fit width={297}>1. 금호1차푸르지오</Fit></SummaryName>
                <SummaryLine><Fit width={211}>건축 연도 : 2005</Fit></SummaryLine>
                <SummaryLine><Fit width={207}>위치 : 금호동3가</Fit></SummaryLine>
              </Summary>
              <MapView />
            </Results>
            <Rule $color="#363636" $margin="1px -72px 0 -22px" />
          </Main>
          <SignUpDialog />
        </Page>
      </Window>
    </Desktop>
  );
}
